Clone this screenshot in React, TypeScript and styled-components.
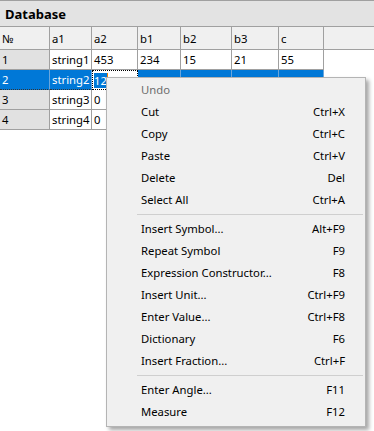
import React from "react";
import styled, { createGlobalStyle, css } from "styled-components";

const Global = createGlobalStyle`
  html, body { margin: 0; padding: 0; background: #fff; }
  body { font-family: "Noto Sans", "Open Sans", sans-serif; font-size: 11.3px; color: #000; }
`;

const Page = styled.div`
  position: relative;
  width: 374px;
  height: 431px;
  overflow: hidden;
  background: #fff;
`;

const TitleBar = styled.div`
  height: 25px;
  border-top: 1px solid #a0a0a0;
  border-bottom: 1px solid #a0a0a0;
  background: #e3e3e3;
  display: flex;
  align-items: center;
  padding-left: 5px;
  font-weight: 700;
  font-size: 13px;
`;

const Grid = styled.div`
  display: grid;
  grid-template-columns: 50px 42px 46px 43px 51px 47px 45px 1fr;
  grid-template-rows: 23px repeat(4, 20px);
`;

type Kind = "head" | "rowhead" | "data" | "selected" | "edit" | "headfill" | "fill";

const Cell = styled.div<{ $kind: Kind }>`
  box-sizing: border-box;
  display: flex;
  align-items: center;
  padding-left: 2px;
  white-space: nowrap;
  overflow: hidden;
  border-right: 1px solid #a0a0a0;
  border-bottom: 1px solid #a0a0a0;
  background: #fff;
  ${(p) => p.$kind === "head" && css`background: #f0f0f0;`}
  ${(p) => p.$kind === "headfill" && css`background: #f0f0f0; border-right: none;`}
  ${(p) => p.$kind === "rowhead" && css`background: #e1e1e1;`}
  ${(p) => p.$kind === "fill" && css`border: none;`}
  ${(p) =>
    p.$kind === "selected" &&
    css`
      background: #0078d7;
      color: #fff;
      border-right-color: #6aa6dc;
      border-bottom: 1px dotted #333;
    `}
  ${(p) =>
    p.$kind === "edit" &&
    css`
      border: 1px dotted #000;
      padding-left: 1px;
    `}
`;

const Highlight = styled.span`
  background: #0078d7;
  color: #fff;
  border-right: 1px solid #f08000;
`;

const Menu = styled.div`
  position: absolute;
  left: 106px;
  top: 77px;
  width: 258px;
  background: #f0f0f0;
  border: 1px solid #b4b4b4;
  padding: 1px 0 3px;
  box-shadow: 3px 3px 4px rgba(0, 0, 0, 0.35);
`;

const Item = styled.div<{ $disabled?: boolean }>`
  box-sizing: border-box;
  height: 22px;
  display: flex;
  align-items: center;
  justify-content: space-between;
  padding: 0 20px 2px 34px;
  color: ${(p) => (p.$disabled ? "#6d6d6d" : "#000")};
`;

const Separator = styled.div`
  height: 7px;
  display: flex;
  align-items: center;
  margin: 0 2px 0 30px;
  &::after {
    content: "";
    flex: 1;
    height: 1px;
    background: #cfcfcf;
  }
`;

const headers = ["№", "a1", "a2", "b1", "b2", "b3", "c"];

const rows: string[][] = [
  ["1", "string1", "453", "234", "15", "21", "55"],
  ["2", "string2", "12", "", "", "", ""],
  ["3", "string3", "0", "", "", "", ""],
  ["4", "string4", "0", "", "", "", ""],
];

type MenuEntry = { label: string; key?: string; disabled?: boolean } | "sep";

const menu: MenuEntry[] = [
  { label: "Undo", disabled: true },
  { label: "Cut", key: "Ctrl+X" },
  { label: "Copy", key: "Ctrl+C" },
  { label: "Paste", key: "Ctrl+V" },
  { label: "Delete", key: "Del" },
  { label: "Select All", key: "Ctrl+A" },
  "sep",
  { label: "Insert Symbol...", key: "Alt+F9" },
  { label: "Repeat Symbol", key: "F9" },
  { label: "Expression Constructor...", key: "F8" },
  { label: "Insert Unit...", key: "Ctrl+F9" },
  { label: "Enter Value...", key: "Ctrl+F8" },
  { label: "Dictionary", key: "F6" },
  { label: "Insert Fraction...", key: "Ctrl+F" },
  "sep",
  { label: "Enter Angle...", key: "F11" },
  { label: "Measure", key: "F12" },
];

export default function App() {
  return (
    <Page>
      <Global />
      <TitleBar>Database</TitleBar>
      <Grid>
        {headers.map((h) => (
          <Cell key={h} $kind="head">{h}</Cell>
        ))}
        <Cell $kind="headfill" />
        {rows.map((r, ri) => {
          const sel = ri === 1;
          return (
            <React.Fragment key={ri}>
              {r.map((v, ci) => {
                let kind: Kind = ci === 0 ? "rowhead" : "data";
                if (sel) kind = ci === 2 ? "edit" : "selected";
                return (
                  <Cell key={ci} $kind={kind}>
                    {sel && ci === 2 ? <Highlight>{v}</Highlight> : v}
                  </Cell>
                );
              })}
              <Cell $kind="fill" />
            </React.Fragment>
          );
        })}
      </Grid>
      <Menu>
        {menu.map((m, i) =>
          m === "sep" ? (
            <Separator key={i} />
          ) : (
            <Item key={i} $disabled={m.disabled}>
              <span>{m.label}</span>
              <span>{m.key}</span>
            </Item>
          )
        )}
      </Menu>
    </Page>
  );
}
